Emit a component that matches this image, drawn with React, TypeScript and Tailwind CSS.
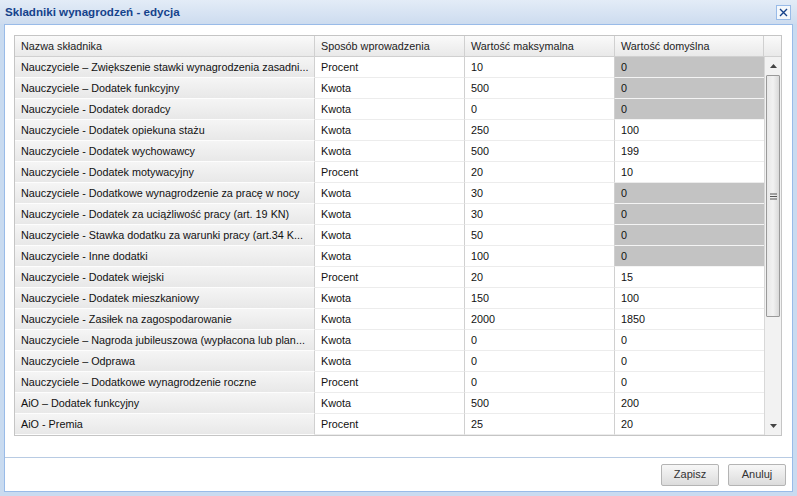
import React from "react";

type Row = { name: string; mode: string; max: string; def: string; gray: boolean };

const rows: Row[] = [
  { name: "Nauczyciele – Zwiększenie stawki wynagrodzenia zasadni...", mode: "Procent", max: "10", def: "0", gray: true },
  { name: "Nauczyciele – Dodatek funkcyjny", mode: "Kwota", max: "500", def: "0", gray: true },
  { name: "Nauczyciele - Dodatek doradcy", mode: "Kwota", max: "0", def: "0", gray: true },
  { name: "Nauczyciele - Dodatek opiekuna stażu", mode: "Kwota", max: "250", def: "100", gray: false },
  { name: "Nauczyciele - Dodatek wychowawcy", mode: "Kwota", max: "500", def: "199", gray: false },
  { name: "Nauczyciele - Dodatek motywacyjny", mode: "Procent", max: "20", def: "10", gray: false },
  { name: "Nauczyciele - Dodatkowe wynagrodzenie za pracę w nocy", mode: "Kwota", max: "30", def: "0", gray: true },
  { name: "Nauczyciele - Dodatek za uciążliwość pracy (art. 19 KN)", mode: "Kwota", max: "30", def: "0", gray: true },
  { name: "Nauczyciele - Stawka dodatku za warunki pracy (art.34 K...", mode: "Kwota", max: "50", def: "0", gray: true },
  { name: "Nauczyciele - Inne dodatki", mode: "Kwota", max: "100", def: "0", gray: true },
  { name: "Nauczyciele - Dodatek wiejski", mode: "Procent", max: "20", def: "15", gray: false },
  { name: "Nauczyciele - Dodatek mieszkaniowy", mode: "Kwota", max: "150", def: "100", gray: false },
  { name: "Nauczyciele - Zasiłek na zagospodarowanie", mode: "Kwota", max: "2000", def: "1850", gray: false },
  { name: "Nauczyciele – Nagroda jubileuszowa (wypłacona lub plan...", mode: "Kwota", max: "0", def: "0", gray: false },
  { name: "Nauczyciele – Odprawa", mode: "Kwota", max: "0", def: "0", gray: false },
  { name: "Nauczyciele – Dodatkowe wynagrodzenie roczne", mode: "Procent", max: "0", def: "0", gray: false },
  { name: "AiO – Dodatek funkcyjny", mode: "Kwota", max: "500", def: "200", gray: false },
  { name: "AiO - Premia", mode: "Procent", max: "25", def: "20", gray: false },
];

function HeaderCell({ label, w }: { label: string; w: string }) {
  return (
    <div className={`${w} h-full flex items-center pl-[6px] border-r border-[#d0d0d0] whitespace-nowrap`}>
      {label}
    </div>
  );
}

export default function App() {
  return (
    <div
      className="w-[797px] h-[496px] bg-[#c9dbf0] flex flex-col text-[10.8px] text-[#111] overflow-hidden"
      style={{ fontFamily: '"Liberation Sans", Arial, sans-serif' }}
    >
      {/* title bar */}
      <div className="h-[24px] shrink-0 flex items-center justify-between pl-[5px] pr-[6px] bg-gradient-to-b from-[#e3ecf7] to-[#cddcef]">
        <span className="text-[11.6px] font-bold text-[#15428b]">Skladniki wynagrodzeń - edycja</span>
        <div className="w-[15px] h-[15px] bg-[#f4f8fc] border border-[#99bbe8] flex items-center justify-center">
          <svg width="9" height="9" viewBox="0 0 9 9">
            <path d="M1 1 L8 8 M8 1 L1 8" stroke="#15428b" strokeWidth="1.4" />
          </svg>
        </div>
      </div>

      {/* body */}
      <div className="mx-[4px] h-[468px] bg-white border border-[#99bbe8] flex flex-col">
        <div className="pt-[10px] pl-[9px] pr-[9px]">
          <div className="w-[768px] border border-[#c5c5c5] bg-white">
            {/* header */}
            <div className="h-[21px] flex bg-gradient-to-b from-[#fafafa] to-[#e9e9e9] border-b border-[#d0d0d0] text-[#222]">
              <HeaderCell label="Nazwa składnika" w="w-[300px]" />
              <HeaderCell label="Sposób wprowadzenia" w="w-[150px]" />
              <HeaderCell label="Wartość maksymalna" w="w-[150px]" />
              <HeaderCell label="Wartość domyślna" w="w-[149px]" />
              <div className="flex-1" />
            </div>
            <div className="flex">
              <div className="w-[749px]">
                {rows.map((r, i) => (
                  <div key={i} className="h-[21px] flex">
                    <div className="w-[300px] h-full flex items-center pl-[6px] bg-gradient-to-b from-[#f5f5f5] to-[#e8e8e8] border-b border-[#fdfdfd] border-r border-r-[#d0d0d0] whitespace-nowrap overflow-hidden">
                      {r.name}
                    </div>
                    <div className="w-[150px] h-full flex items-center pl-[6px] border-b border-[#ececec] border-r border-r-[#d0d0d0]">
                      {r.mode}
                    </div>
                    <div className="w-[150px] h-full flex items-center pl-[6px] border-b border-[#ececec] border-r border-r-[#d0d0d0]">
                      {r.max}
                    </div>
                    <div
                      className={`w-[149px] h-full flex items-center pl-[6px] border-b ${
                        r.gray ? "bg-[#c3c3c3] border-[#f4f4f4]" : "border-[#ececec]"
                      }`}
                    >
                      {r.def}
                    </div>
                  </div>
                ))}
              </div>
              {/* scrollbar */}
              <div className="w-[18px] h-[378px] flex flex-col bg-[#f2f2f2] border-l border-[#d8d8d8]">
                <div className="h-[18px] flex items-center justify-center">
                  <svg width="7" height="4" viewBox="0 0 7 4">
                    <path d="M3.5 0 L7 4 L0 4 Z" fill="#444" />
                  </svg>
                </div>
                <div className="mx-[1px] h-[242px] border border-[#9a9a9a] rounded-[1px] bg-gradient-to-r from-[#e8e8e8] via-[#f2f2f2] to-[#d9d9d9] flex items-center justify-center">
                  <svg width="7" height="7" viewBox="0 0 7 7">
                    <path d="M0 1 H7 M0 3.5 H7 M0 6 H7" stroke="#555" strokeWidth="1" />
                  </svg>
                </div>
                <div className="flex-1" />
                <div className="h-[18px] flex items-center justify-center">
                  <svg width="7" height="4" viewBox="0 0 7 4">
                    <path d="M0 0 L7 0 L3.5 4 Z" fill="#444" />
                  </svg>
                </div>
              </div>
            </div>
          </div>
        </div>
        <div className="flex-1" />
        {/* footer */}
        <div className="h-[34px] border-t border-[#b8cbe3] flex items-center justify-end gap-[9px] pr-[6px]">
          <button className="w-[58px] h-[22px] border border-[#b4b4b4] rounded-[2px] bg-gradient-to-b from-[#f7f7f7] to-[#dcdcdc] text-[#333] text-[11px]">
            Zapisz
          </button>
          <button className="w-[58px] h-[22px] border border-[#b4b4b4] rounded-[2px] bg-gradient-to-b from-[#f7f7f7] to-[#dcdcdc] text-[#333] text-[11px]">
            Anuluj
          </button>
        </div>
      </div>
    </div>
  );
}
